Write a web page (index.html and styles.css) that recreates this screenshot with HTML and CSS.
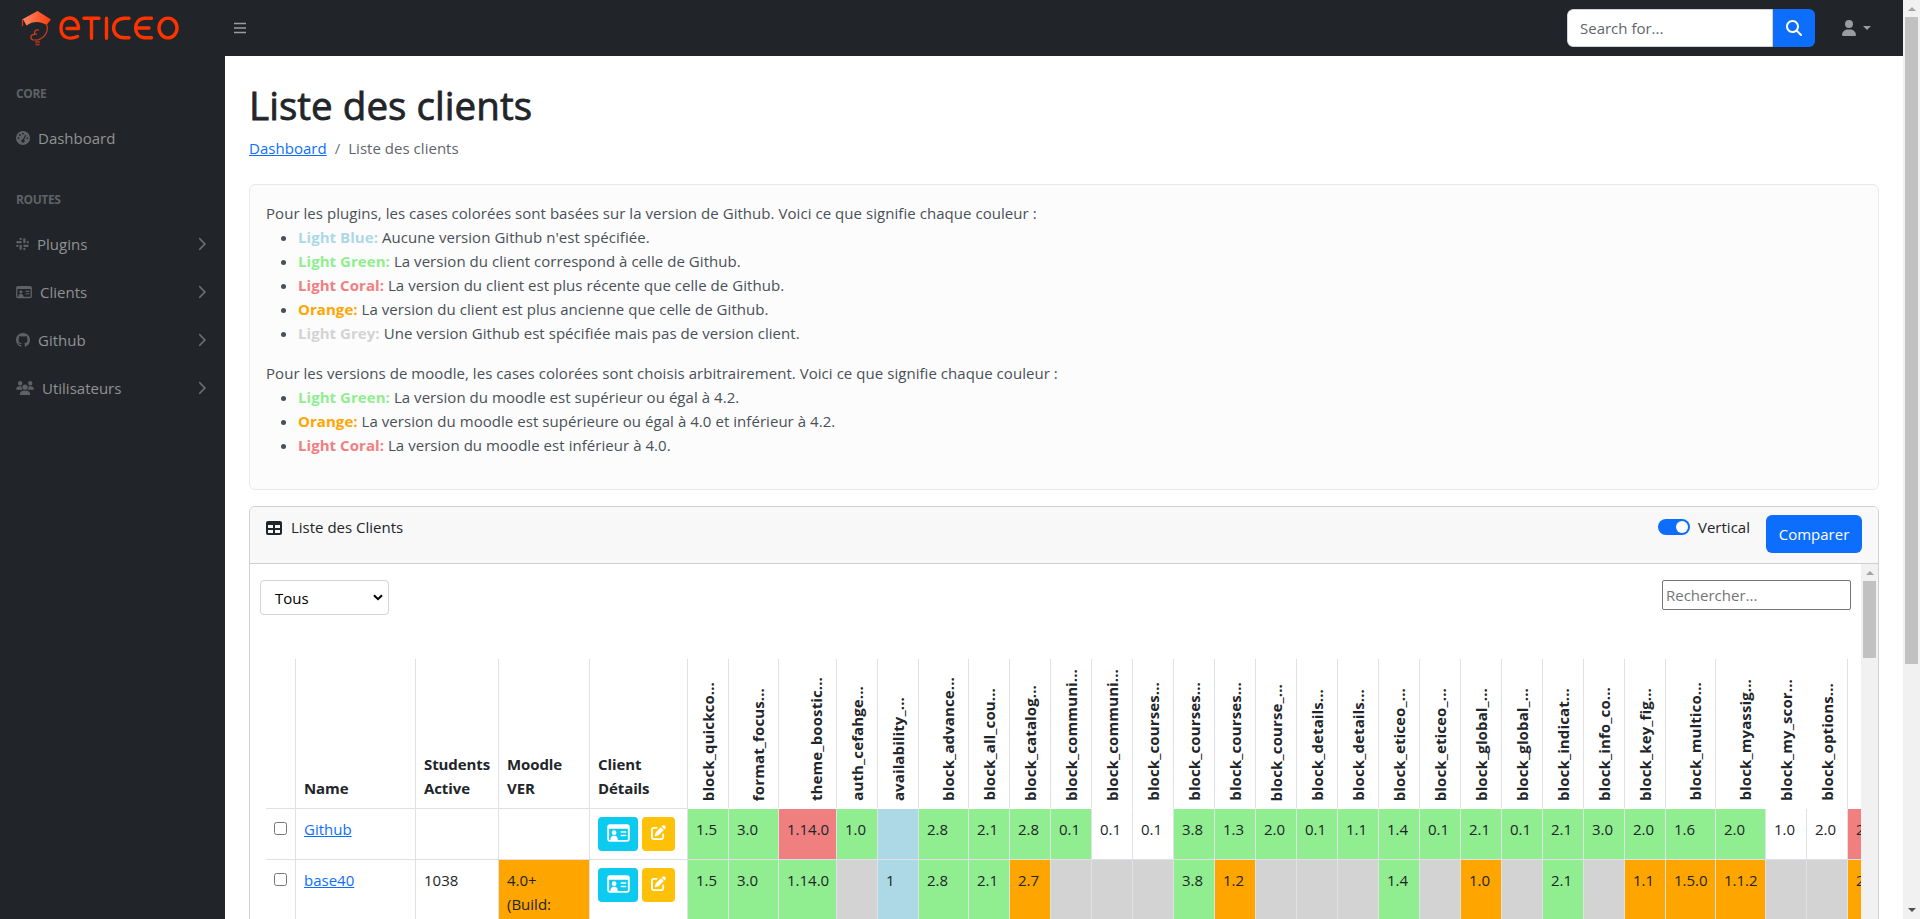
FILE: index.html
```html
<!DOCTYPE html>
<html lang="fr">
<head>
<meta charset="utf-8">
<title>Liste des clients</title>
<link rel="stylesheet" href="styles.css">
</head>
<body>
<svg class="sprite" aria-hidden="true">
  <symbol id="idcard" viewBox="0 0 576 512"><path fill-rule="evenodd" d="M64 32h448c35 0 64 29 64 64v320c0 35-29 64-64 64H64c-35 0-64-29-64-64V96c0-35 29-64 64-64zM48 144v272c0 9 7 16 16 16h448c9 0 16-7 16-16V144z"/><circle cx="176" cy="248" r="60"/><path d="M80 440c0-70 30-112 80-112h32c50 0 80 42 80 112zM360 212h110a20 20 0 0 1 0 40H360a20 20 0 0 1 0-40zM360 300h110a20 20 0 0 1 0 40H360a20 20 0 0 1 0-40z"/></symbol>
  <symbol id="edit" viewBox="0 0 512 512"><path d="M471.600 21.700c-21.900-21.900-57.300-21.900-79.200 0L362.300 51.700l97.900 97.900 30.100-30.100c21.900-21.900 21.900-57.300 0-79.200L471.600 21.700zm-299.200 220c-6.100 6.100-10.800 13.600-13.500 21.900l-29.600 88.800c-2.900 8.600-.6 18.100 5.800 24.600s15.900 8.700 24.600 5.800l88.800-29.600c8.200-2.700 15.700-7.400 21.900-13.500L437.700 172.300 339.700 74.300 172.400 241.700zM96 64C43 64 0 107 0 160L0 416c0 53 43 96 96 96l256 0c53 0 96-43 96-96l0-96c0-17.700-14.300-32-32-32s-32 14.300-32 32l0 96c0 17.700-14.300 32-32 32L96 448c-17.700 0-32-14.300-32-32l0-256c0-17.700 14.300-32 32-32l96 0c17.700 0 32-14.300 32-32s-14.300-32-32-32L96 64z"/></symbol>
  <symbol id="chev" viewBox="0 0 320 512"><path d="M310.600 233.400c12.500 12.500 12.500 32.800 0 45.300l-192 192c-12.500 12.500-32.800 12.500-45.300 0s-12.500-32.800 0-45.300L242.700 256 73.400 86.600c-12.500-12.500-12.500-32.800 0-45.300s32.800-12.500 45.300 0l192 192z"/></symbol>
</svg>

<header class="topbar">
  <a class="brand">
    <svg width="170" height="40" viewBox="0 0 170 40">
      <defs><linearGradient id="cap" x1="0" x2="1"><stop offset="0" stop-color="#ff8a6a"/><stop offset="1" stop-color="#ff3c0a"/></linearGradient></defs>
      <path d="M6 11.500L21.500 3 35 11.500 30.500 17C24 13 17 13 10.500 17.500L7.500 12z" fill="url(#cap)"/>
      <path d="M6.500 11.500V18M30.500 16.500c2.500 6-1 13-8.500 15.500h-5c-3.500-1-2.500-6 2-5.500M23 22c-5-1-6 4-2 4.500" fill="none" stroke="#d93a18" stroke-width="1.200"/>
      <path d="M19 34h5M19.500 36.500h4" stroke="#b5321a" stroke-width="1.600"/>
      <g fill="none" stroke="#ff3300" stroke-width="3.400" stroke-linecap="round" stroke-linejoin="round">
        <path d="M51 20.500h11.500c0-14-17.500-14-17.500-.5 0 11 10 11.500 16.500 8.500M68 10.200h15M75.500 10.200v20M90.500 10.200v20M113 10.200h-4.500c-14.500 0-14.500 19.600 0 19.600h4.500M135.500 10.200h-6.500c-12.500 0-12.500 19.600 0 19.600h6.500M121 20h12"/>
        <ellipse cx="152" cy="20" rx="9" ry="9.900"/>
      </g>
    </svg>
  </a>
  <svg class="burger" width="12" height="14" viewBox="0 0 12 14"><path d="M0 2.500h12M0 7h12M0 11.500h12" stroke="#9a9c9e" stroke-width="1.300"/></svg>
  <div class="search"><span class="search-field">Search for...</span><span class="search-btn"><svg width="16" height="16" viewBox="0 0 512 512" fill="#fff"><path d="M416 208c0 45.900-14.900 88.300-40 122.700L502.600 457.400c12.500 12.500 12.500 32.800 0 45.300s-32.800 12.500-45.300 0L330.700 376c-34.400 25.200-76.800 40-122.700 40C93.100 416 0 322.900 0 208S93.100 0 208 0S416 93.100 416 208zM208 352a144 144 0 1 0 0-288 144 144 0 1 0 0 288z"/></svg></span></div>
  <div class="user"><svg width="14" height="16" viewBox="0 0 448 512" fill="#9a9c9e"><path d="M224 256A128 128 0 1 0 224 0a128 128 0 1 0 0 256zm-45.700 48C79.800 304 0 383.800 0 482.300C0 498.700 13.300 512 29.700 512l388.600 0c16.400 0 29.700-13.300 29.700-29.700C448 383.800 368.200 304 269.700 304l-91.400 0z"/></svg><i class="caret"></i></div>
</header>

<div class="shell">
  <nav class="side">
    <div class="side-head">CORE</div>
    <a class="side-link"><svg width="14" height="14" viewBox="0 0 14 14"><circle cx="7" cy="7" r="7" fill="#5f6265"/><g fill="#212529"><circle cx="7" cy="2.600" r=".9"/><circle cx="3.900" cy="4" r=".9"/><circle cx="2.600" cy="7.200" r=".9"/><circle cx="11.400" cy="7.200" r=".9"/><circle cx="7" cy="10" r="1.700"/></g><path d="M7 10L9.600 4" stroke="#212529" stroke-width="1.100"/></svg><span>Dashboard</span></a>
    <div class="side-head">ROUTES</div>
    <a class="side-link"><svg width="13" height="14" viewBox="0 0 14 14" stroke="#5f6265" stroke-width="2.500" stroke-linecap="round"><path d="M5 1.500v.1M5 5H1.400M9 2v3M12.600 5v.1M9 9h3.500M9 12.500v-.1M5 9v3.200M1.500 9v.1"/></svg><span>Plugins</span><svg class="chev" width="9" height="14"><use href="#chev"/></svg></a>
    <a class="side-link"><svg width="16" height="14" fill="#5f6265"><use href="#idcard"/></svg><span>Clients</span><svg class="chev" width="9" height="14"><use href="#chev"/></svg></a>
    <a class="side-link"><svg width="14" height="14" viewBox="0 0 16 16" fill="#5f6265"><path d="M8 0C3.580 0 0 3.580 0 8c0 3.540 2.290 6.530 5.470 7.590.4.070.55-.17.55-.38 0-.19-.01-.82-.01-1.490-2.010.37-2.530-.49-2.690-.94-.09-.23-.48-.94-.82-1.130-.28-.15-.68-.52-.01-.53.63-.01 1.080.58 1.230.82.72 1.210 1.870.87 2.330.66.070-.52.28-.87.51-1.070-1.780-.2-3.640-.89-3.640-3.950 0-.87.310-1.590.82-2.150-.08-.2-.36-1.020.08-2.120 0 0 .67-.21 2.200.82a7.600 7.600 0 0 1 4 0c1.530-1.040 2.200-.82 2.200-.82.44 1.100.16 1.920.08 2.120.51.56.82 1.270.82 2.150 0 3.070-1.870 3.750-3.650 3.950.29.25.54.73.54 1.480 0 1.070-.01 1.930-.01 2.200 0 .21.150.46.55.38A8 8 0 0 0 16 8c0-4.420-3.580-8-8-8z"/></svg><span>Github</span><svg class="chev" width="9" height="14"><use href="#chev"/></svg></a>
    <a class="side-link"><svg width="18" height="14" viewBox="0 0 640 512" fill="#5f6265"><path d="M144 0a80 80 0 1 1 0 160A80 80 0 1 1 144 0zM512 0a80 80 0 1 1 0 160A80 80 0 1 1 512 0zM0 298.700C0 239.800 47.800 192 106.700 192h42.700c15.900 0 31 3.500 44.600 9.700-1.300 7.200-1.900 14.700-1.900 22.300 0 38.200 16.800 72.500 43.300 96H21.300C9.600 320 0 310.400 0 298.700zM405.300 320h-.7c26.600-23.500 43.300-57.800 43.300-96 0-7.600-.7-15-1.900-22.300 13.600-6.300 28.700-9.700 44.600-9.700h42.700C592.200 192 640 239.800 640 298.700c0 11.800-9.600 21.300-21.300 21.300H405.300zM224 224a96 96 0 1 1 192 0 96 96 0 1 1-192 0zM128 485.300C128 411.700 187.700 352 261.300 352h117.300C452.300 352 512 411.700 512 485.300c0 14.700-11.900 26.700-26.700 26.700H154.700c-14.700 0-26.700-11.900-26.700-26.700z"/></svg><span>Utilisateurs</span><svg class="chev" width="9" height="14"><use href="#chev"/></svg></a>
  </nav>

  <main class="content">
    <h1>Liste des clients</h1>
    <div class="crumbs"><a>Dashboard</a><i>/</i><span>Liste des clients</span></div>

    <section class="legend">
      <p>Pour les plugins, les cases colorées sont basées sur la version de Github. Voici ce que signifie chaque couleur :</p>
      <ul>
        <li><b class="t-blue">Light Blue:</b> Aucune version Github n'est spécifiée.</li>
        <li><b class="t-green">Light Green:</b> La version du client correspond à celle de Github.</li>
        <li><b class="t-coral">Light Coral:</b> La version du client est plus récente que celle de Github.</li>
        <li><b class="t-orange">Orange:</b> La version du client est plus ancienne que celle de Github.</li>
        <li><b class="t-grey">Light Grey:</b> Une version Github est spécifiée mais pas de version client.</li>
      </ul>
      <p>Pour les versions de moodle, les cases colorées sont choisis arbitrairement. Voici ce que signifie chaque couleur :</p>
      <ul>
        <li><b class="t-green">Light Green:</b> La version du moodle est supérieur ou égal à 4.2.</li>
        <li><b class="t-orange">Orange:</b> La version du moodle est supérieure ou égal à 4.0 et inférieur à 4.2.</li>
        <li><b class="t-coral">Light Coral:</b> La version du moodle est inférieur à 4.0.</li>
      </ul>
    </section>

    <section class="card">
      <div class="card-head">
        <svg width="16" height="14" viewBox="0 0 16 14"><path fill="#212529" fill-rule="evenodd" d="M2 0h12a2 2 0 0 1 2 2v10a2 2 0 0 1-2 2H2a2 2 0 0 1-2-2V2a2 2 0 0 1 2-2zM2 4v3h5V4zM9 4v3h5V4zM2 9v3h5V9zM9 9v3h5V9z"/></svg>
        <span class="card-title">Liste des Clients</span>
        <span class="switch"><i></i></span>
        <span class="switch-label">Vertical</span>
        <button class="compare">Comparer</button>
      </div>
      <div class="card-body">
        <div class="pane">
          <div class="tools">
            <div class="select"><span>Tous</span><svg width="10" height="7" viewBox="0 0 10 7"><path d="M1 1.200l4 4 4-4" fill="none" stroke="#000" stroke-width="2"/></svg></div>
            <div class="filter">Rechercher...</div>
          </div>
          <table class="grid">
            <colgroup id="cols"></colgroup>
            <thead><tr id="head"></tr></thead>
            <tbody id="rows"></tbody>
          </table>
        </div>
        <div class="bar bar-in"><i class="up"></i><b></b></div>
      </div>
    </section>
  </main>
</div>
<div class="bar bar-page"><i class="up"></i><b></b><i class="down"></i></div>
<script src="table.js"></script>
</body>
</html>
```
FILE: styles.css
```css
* { box-sizing: border-box; }
body {
  margin: 0; height: 919px; overflow: hidden; position: relative;
  font-family: "Open Sans", "Noto Sans", sans-serif; font-size: 15px; line-height: 24px;
  color: #212529; background: #fff;
}
.sprite { display: none; }
svg { flex: none; }
.topbar { display: flex; align-items: center; height: 56px; width: 1903px; background: #212529; }
.brand { width: 225px; height: 56px; padding: 8px 0 0 16px; }
.burger { margin-left: 9px; }
.search { display: flex; margin-left: auto; height: 38px; width: 248px; border-radius: 6px; overflow: hidden; }
.search-field { flex: 1; background: #fff; border: 1px solid #ced4da; border-radius: 6px 0 0 6px; padding: 6px 12px; color: #5f666c; }
.search-btn { width: 42px; background: #0d6efd; display: flex; align-items: center; justify-content: center; }
.user { display: flex; align-items: center; margin: 0 32px 0 27px; width: 29px; }
.caret { margin-left: 7px; border: 4px solid transparent; border-top-color: #9a9c9e; border-bottom: 0; }

.shell { display: flex; width: 1903px; height: 863px; }
.side { width: 225px; flex: none; background: #212529; color: #909294; }
.side-head { padding: 28px 16px 12px; height: 58px; font-size: 12px; line-height: 19px; font-weight: 700; color: #5f6265; letter-spacing: -.4px; }
.side-link { display: flex; align-items: center; height: 48px; padding: 0 19px 0 16px; }
.side-link span { margin-left: 8px; }
.chev { margin-left: auto; fill: #6b6e70; }

.content { width: 1678px; padding: 24px 24px 0; overflow: hidden; }
h1 { margin: 0; padding-top: 1px; font-size: 38.500px; line-height: 48px; height: 48px; font-weight: 500; letter-spacing: .05px; -webkit-text-stroke: .8px #212529; }
.crumbs { display: flex; gap: 8px; height: 24px; margin: 8px 0 24px; letter-spacing: .03px; }
.crumbs a, .name { color: #0d6efd; text-decoration: underline; }
.crumbs i { font-style: normal; color: #6c757d; }
.crumbs span { color: #5f666c; }
.legend { height: 306px; padding: 16px; border: 1px solid #e9eaeb; border-radius: 6px; background: #fcfcfc; color: #495057; letter-spacing: .05px; }
.legend p { margin: 0; }
.legend ul { margin: 0 0 16px; padding-left: 32px; }
.t-blue { color: lightblue; } .t-green { color: lightgreen; } .t-coral { color: lightcoral; } .t-orange { color: orange; } .t-grey { color: lightgrey; }

.card { height: 480px; margin-top: 16px; border: 1px solid #cfd0d1; border-radius: 6px; }
.card-head { display: flex; height: 57px; padding: 8px 16px; background: #f8f8f8; border-bottom: 1px solid #cfd0d1; border-radius: 5px 5px 0 0; }
.card-head > svg { margin-top: 6px; }
.card-title { margin-left: 9px; }
.switch { width: 32px; height: 16px; margin: 4px 8px 0 auto; border-radius: 8px; background: #0d6efd; padding: 2px 2px 0 18px; }
.switch i { display: block; width: 12px; height: 12px; border-radius: 50%; background: #fff; }
.switch-label { width: 52px; }
.compare { margin-left: 16px; width: 96px; height: 38px; border: 0; border-radius: 6px; background: #0d6efd; color: #fff; font: inherit; padding: 0; }
.card-body { display: flex; height: 422px; }
.pane { width: 1611px; overflow: hidden; }
.tools { display: flex; justify-content: space-between; padding: 16px 10px 0; height: 95px; }
.select { display: flex; justify-content: space-between; width: 129px; height: 35px; padding: 5px 5px 0 14px; border: 1px solid #ced4da; border-radius: 4px; color: #000; }
.select svg { margin-top: 8px; }
.filter { width: 189px; height: 30px; border: 1px solid #767676; border-radius: 2px; padding: 2px 3px; color: #757575; }

.grid { table-layout: fixed; width: 1632px; margin-left: 16px; border-collapse: separate; border-spacing: 0; }
th, td { padding: 8px; text-align: left; border-right: 1px solid #dee2e6; border-bottom: 1px solid #dee2e6; vertical-align: top; }
th { height: 150px; vertical-align: bottom; white-space: pre-line; letter-spacing: -.1px; }
th.plugin { border-bottom-color: #fff; padding: 4px 8px 7px; }
th.open { border-right-color: #fff; }
th.plugin span { display: block; margin: 0 0 0 auto; width: 24px; writing-mode: vertical-rl; transform: rotate(180deg); white-space: nowrap; letter-spacing: .12px; }
td { height: 51px; overflow: hidden; white-space: nowrap; }
tr.tall td { height: 90px; white-space: pre-line; }
.check { display: block; width: 13px; height: 13px; margin: 5px 0 0; border: 1px solid #767676; border-radius: 2.500px; }
.acts { display: flex; gap: 4px; }
.acts span { display: flex; align-items: center; justify-content: center; height: 34px; border-radius: 4px; }
.acts .info { width: 40px; background: #0dcaf0; }
.acts .warn { width: 33px; background: #ffc107; }
.acts svg { fill: #fff; margin-bottom: 3px; }
.g { background: lightgreen; } .c { background: lightcoral; } .b { background: lightblue; } .o { background: orange; } .y { background: lightgrey; }

.bar { background: #f1f1f1; width: 17px; padding: 0 2px; display: flex; flex-direction: column; align-items: center; }
.bar b { width: 13px; background: #c1c1c1; }
.bar i { border: 4px solid transparent; }
.bar .up { border-bottom-color: #a3a3a3; border-top: 0; margin: 7px 0 6px; }
.bar .down { border-top-color: #505050; border-bottom: 0; margin: auto 0 7px; }
.bar-in b { height: 77px; }
.bar-page { position: absolute; top: 0; right: 0; height: 919px; }
.bar-page b { height: 647px; }
```
FILE: table.js
```javascript
// name, column width, Github cell, base40 cell: first letter is the colour class
const plugins = [
  ['block_quickco...', 41, 'g1.5', 'g1.5'], ['format_focus...', 50, 'g3.0', 'g3.0'],
  ['theme_boostic...', 58, 'c1.14.0', 'g1.14.0'], ['auth_cefahge...', 41, 'g1.0', 'y'],
  ['availability_...', 41, 'b', 'b1'], ['block_advance...', 50, 'g2.8', 'g2.8'],
  ['block_all_cou...', 41, 'g2.1', 'g2.1'], ['block_catalog...', 41, 'g2.8', 'o2.7'],
  ['block_communi...', 41, 'g0.1', 'y'], ['block_communi...', 41, 'w0.1', 'y'],
  ['block_courses...', 41, 'w0.1', 'y'], ['block_courses...', 41, 'g3.8', 'g3.8'],
  ['block_courses...', 41, 'g1.3', 'o1.2'], ['block_course_...', 41, 'g2.0', 'y'],
  ['block_details...', 41, 'g0.1', 'y'], ['block_details...', 41, 'g1.1', 'y'],
  ['block_eticeo_...', 41, 'g1.4', 'g1.4'], ['block_eticeo_...', 41, 'g0.1', 'y'],
  ['block_global_...', 41, 'g2.1', 'o1.0'], ['block_global_...', 41, 'g0.1', 'y'],
  ['block_indicat...', 41, 'g2.1', 'g2.1'], ['block_info_co...', 41, 'g3.0', 'y'],
  ['block_key_fig...', 41, 'g2.0', 'o1.1'], ['block_multico...', 50, 'g1.6', 'o1.5.0'],
  ['block_myassig...', 50, 'g2.0', 'o1.1.2', 'open'], ['block_my_scor...', 41, 'w1.0', 'y', 'open'],
  ['block_options...', 41, 'w2.0', 'y'], ['', 50, 'c2.0', 'o2.0']
];
const fixed = [['', 30], ['Name', 120], ['Students\nActive', 83], ['Moodle\nVER', 91], ['Client\nDétails', 98]];
const acts = '<div class="acts"><span class="info"><svg width="23" height="20"><use href="#idcard"/></svg></span><span class="warn"><svg width="15" height="15"><use href="#edit"/></svg></span></div>';
const clients = [
  { name: 'Github', students: '', moodle: '', cls: '', col: 2, row: '' },
  { name: 'base40', students: '1038', moodle: '4.0+\n(Build:', cls: 'o', col: 3, row: 'tall' }
];
document.getElementById('cols').innerHTML = [...fixed, ...plugins].map(c => `<col style="width:${c[1]}px">`).join('');
document.getElementById('head').innerHTML =
  fixed.map(c => `<th>${c[0]}</th>`).join('') +
  plugins.map(p => `<th class="plugin ${p[4] || ''}"><span>${p[0]}</span></th>`).join('');
document.getElementById('rows').innerHTML = clients.map(c =>
  `<tr class="${c.row}"><td><i class="check"></i></td><td><a class="name">${c.name}</a></td><td>${c.students}</td><td class="${c.cls}">${c.moodle}</td><td>${acts}</td>` +
  plugins.map(p => `<td class="${p[c.col][0]}">${p[c.col].slice(1)}</td>`).join('') + '</tr>').join('');
```
